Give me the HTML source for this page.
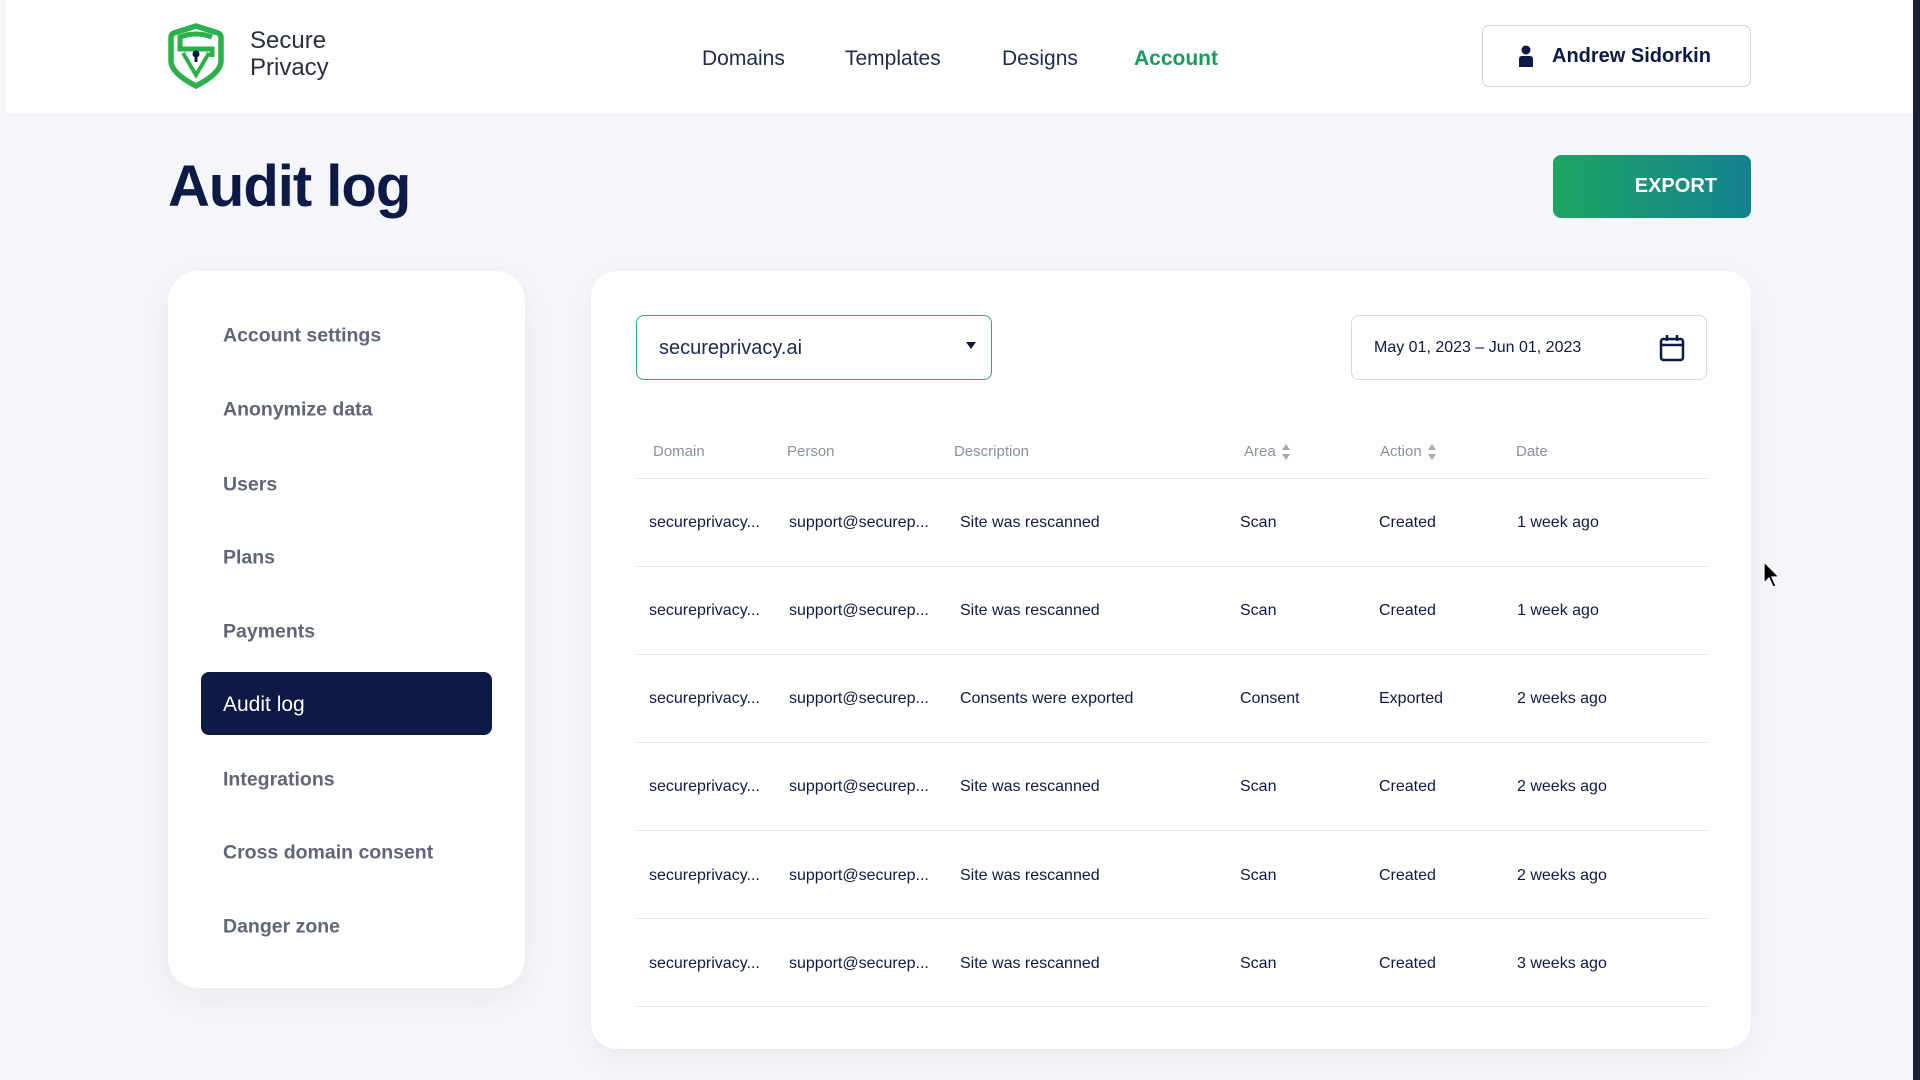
<!DOCTYPE html>
<html><head><meta charset="utf-8"><style>
*{margin:0;padding:0;box-sizing:border-box}
body{width:1920px;height:1080px;background:#f5f6f9;font-family:"Liberation Sans",sans-serif;color:#0c1a45;position:relative;overflow:hidden}
.abs{position:absolute}
.hdr{left:6px;top:0;width:1907px;height:113px;background:#fff}
.nav{top:47px;font-size:21px;color:#1c2a50}
.side{left:168px;top:271px;width:357px;height:717px;background:#fff;border-radius:30px;box-shadow:0 10px 30px rgba(20,30,60,.06)}
.si{left:223px;font-size:19.5px;font-weight:bold;color:#5f6678;transform:translateY(-50%)}
.main{left:591px;top:271px;width:1160px;height:778px;background:#fff;border-radius:26px;box-shadow:0 10px 30px rgba(20,30,60,.05)}
.th{top:443px;font-size:15px;color:#8a90a0}
.td{font-size:16px;color:#0c1a45;transform:translateY(-50%);white-space:nowrap}
.ln{left:636px;width:1072px;height:1px;background:#e3e5ea}
.ar{display:inline-block;vertical-align:middle;margin-left:6px}
</style></head><body>
<div class="abs hdr"></div>
<svg class="abs" style="left:168px;top:23px" width="56" height="66" viewBox="0 0 56 66">
<path d="M28 3 L50 10 Q53 11 53 15 V38 Q53 50 28 63 Q3 50 3 38 V15 Q3 11 6 10 Z" fill="none" stroke="#2bb04a" stroke-width="5.5"/>
<path d="M44 14 Q28 8 12 14 V26 H44 V34" fill="none" stroke="#2bb04a" stroke-width="5"/>
<path d="M15 30 L28 52 L41 30" fill="none" stroke="#2bb04a" stroke-width="4"/>
<circle cx="28" cy="31" r="3.5" fill="#0c1a45"/><rect x="26.5" y="32" width="3" height="7" fill="#0c1a45"/>
</svg>
<div class="abs" style="left:250px;top:27px;font-size:24px;line-height:27px;color:#2a2f3d">Secure<br>Privacy</div>
<div class="abs nav" style="left:702px">Domains</div>
<div class="abs nav" style="left:845px">Templates</div>
<div class="abs nav" style="left:1002px">Designs</div>
<div class="abs nav" style="left:1134px;color:#1a9a5c;font-weight:bold">Account</div>
<div class="abs" style="left:1482px;top:25px;width:269px;height:62px;border:1px solid #cfd3dc;border-radius:7px;background:#fff"></div>
<svg class="abs" style="left:1516px;top:45px" width="20" height="22" viewBox="0 0 20 22"><circle cx="10" cy="5" r="4.5" fill="#0c1a45"/><path d="M3 22 V14 Q3 11 6 11 H14 Q17 11 17 14 V22 Z" fill="#0c1a45"/></svg>
<div class="abs" style="left:1552px;top:45px;font-size:20px;font-weight:bold">Andrew Sidorkin</div>
<div class="abs" style="left:168px;top:153px;font-size:58px;font-weight:bold;letter-spacing:-1px">Audit log</div>
<div class="abs" style="left:1553px;top:155px;width:198px;height:63px;border-radius:8px;background:linear-gradient(90deg,#1fa463,#128290);color:#fff;font-size:20px;font-weight:bold;line-height:63px;text-align:right;padding-right:34px">EXPORT</div>
<div class="abs side"></div>
<div class="abs si" style="top:336px">Account settings</div>
<div class="abs si" style="top:410px">Anonymize data</div>
<div class="abs si" style="top:485px">Users</div>
<div class="abs si" style="top:558px">Plans</div>
<div class="abs si" style="top:632px">Payments</div>
<div class="abs" style="left:201px;top:672px;width:291px;height:63px;background:#0c1a45;border-radius:8px"></div>
<div class="abs si" style="top:705px;color:#fff;font-weight:normal;font-size:21px">Audit log</div>
<div class="abs si" style="top:780px">Integrations</div>
<div class="abs si" style="top:853px">Cross domain consent</div>
<div class="abs si" style="top:927px">Danger zone</div>
<div class="abs main"></div>
<div class="abs" style="left:636px;top:315px;width:356px;height:65px;border:1.5px solid #2fae6b;border-radius:8px"></div>
<div class="abs" style="left:659px;top:337px;font-size:20px;color:#1c2a50">secureprivacy.ai</div>
<div class="abs" style="left:966px;top:342px;width:0;height:0;border-left:5px solid transparent;border-right:5px solid transparent;border-top:7px solid #0c1a45"></div>
<div class="abs" style="left:1351px;top:315px;width:356px;height:65px;border:1px solid #d3d9e5;border-radius:8px"></div>
<div class="abs" style="left:1374px;top:339px;font-size:16px">May 01, 2023 – Jun 01, 2023</div>
<svg class="abs" style="left:1659px;top:334px" width="26" height="28" viewBox="0 0 26 28"><rect x="2" y="5" width="22" height="21" rx="2.5" fill="none" stroke="#0c1a45" stroke-width="2.5"/><path d="M2 11 H24 M8 1 V7 M18 1 V7" stroke="#0c1a45" stroke-width="2.5"/></svg>
<div class="abs th" style="left:653px">Domain</div>
<div class="abs th" style="left:787px">Person</div>
<div class="abs th" style="left:954px">Description</div>
<div class="abs th" style="left:1244px">Area<svg class="ar" width="8" height="16" viewBox="0 0 8 16"><path d="M4 0 L8 6 H0 Z M4 16 L8 10 H0 Z" fill="#a5aab6"/></svg></div>
<div class="abs th" style="left:1380px">Action<svg class="ar" width="8" height="16" viewBox="0 0 8 16"><path d="M4 0 L8 6 H0 Z M4 16 L8 10 H0 Z" fill="#a5aab6"/></svg></div>
<div class="abs th" style="left:1516px">Date</div>
<div class="abs ln" style="top:478px"></div>
<div class="abs ln" style="top:566px"></div>
<div class="abs ln" style="top:654px"></div>
<div class="abs ln" style="top:742px"></div>
<div class="abs ln" style="top:830px"></div>
<div class="abs ln" style="top:918px"></div>
<div class="abs ln" style="top:1006px"></div>
<div class="abs td" style="left:649px;top:523px">secureprivacy...</div><div class="abs td" style="left:789px;top:523px">support@securep...</div><div class="abs td" style="left:960px;top:523px">Site was rescanned</div><div class="abs td" style="left:1240px;top:523px">Scan</div><div class="abs td" style="left:1379px;top:523px">Created</div><div class="abs td" style="left:1517px;top:523px">1 week ago</div>
<div class="abs td" style="left:649px;top:611px">secureprivacy...</div><div class="abs td" style="left:789px;top:611px">support@securep...</div><div class="abs td" style="left:960px;top:611px">Site was rescanned</div><div class="abs td" style="left:1240px;top:611px">Scan</div><div class="abs td" style="left:1379px;top:611px">Created</div><div class="abs td" style="left:1517px;top:611px">1 week ago</div>
<div class="abs td" style="left:649px;top:699px">secureprivacy...</div><div class="abs td" style="left:789px;top:699px">support@securep...</div><div class="abs td" style="left:960px;top:699px">Consents were exported</div><div class="abs td" style="left:1240px;top:699px">Consent</div><div class="abs td" style="left:1379px;top:699px">Exported</div><div class="abs td" style="left:1517px;top:699px">2 weeks ago</div>
<div class="abs td" style="left:649px;top:787px">secureprivacy...</div><div class="abs td" style="left:789px;top:787px">support@securep...</div><div class="abs td" style="left:960px;top:787px">Site was rescanned</div><div class="abs td" style="left:1240px;top:787px">Scan</div><div class="abs td" style="left:1379px;top:787px">Created</div><div class="abs td" style="left:1517px;top:787px">2 weeks ago</div>
<div class="abs td" style="left:649px;top:876px">secureprivacy...</div><div class="abs td" style="left:789px;top:876px">support@securep...</div><div class="abs td" style="left:960px;top:876px">Site was rescanned</div><div class="abs td" style="left:1240px;top:876px">Scan</div><div class="abs td" style="left:1379px;top:876px">Created</div><div class="abs td" style="left:1517px;top:876px">2 weeks ago</div>
<div class="abs td" style="left:649px;top:964px">secureprivacy...</div><div class="abs td" style="left:789px;top:964px">support@securep...</div><div class="abs td" style="left:960px;top:964px">Site was rescanned</div><div class="abs td" style="left:1240px;top:964px">Scan</div><div class="abs td" style="left:1379px;top:964px">Created</div><div class="abs td" style="left:1517px;top:964px">3 weeks ago</div>
<svg class="abs" style="left:1763px;top:561px" width="18" height="28" viewBox="0 0 18 28"><path d="M1 1 V22 L6 17 L10 26 L13 25 L9 16 L16 16 Z" fill="#000" stroke="#fff" stroke-width="1.2"/></svg>
<div class="abs" style="left:1913px;top:0;width:7px;height:1080px;background:#1a2236"></div>
</body></html>
